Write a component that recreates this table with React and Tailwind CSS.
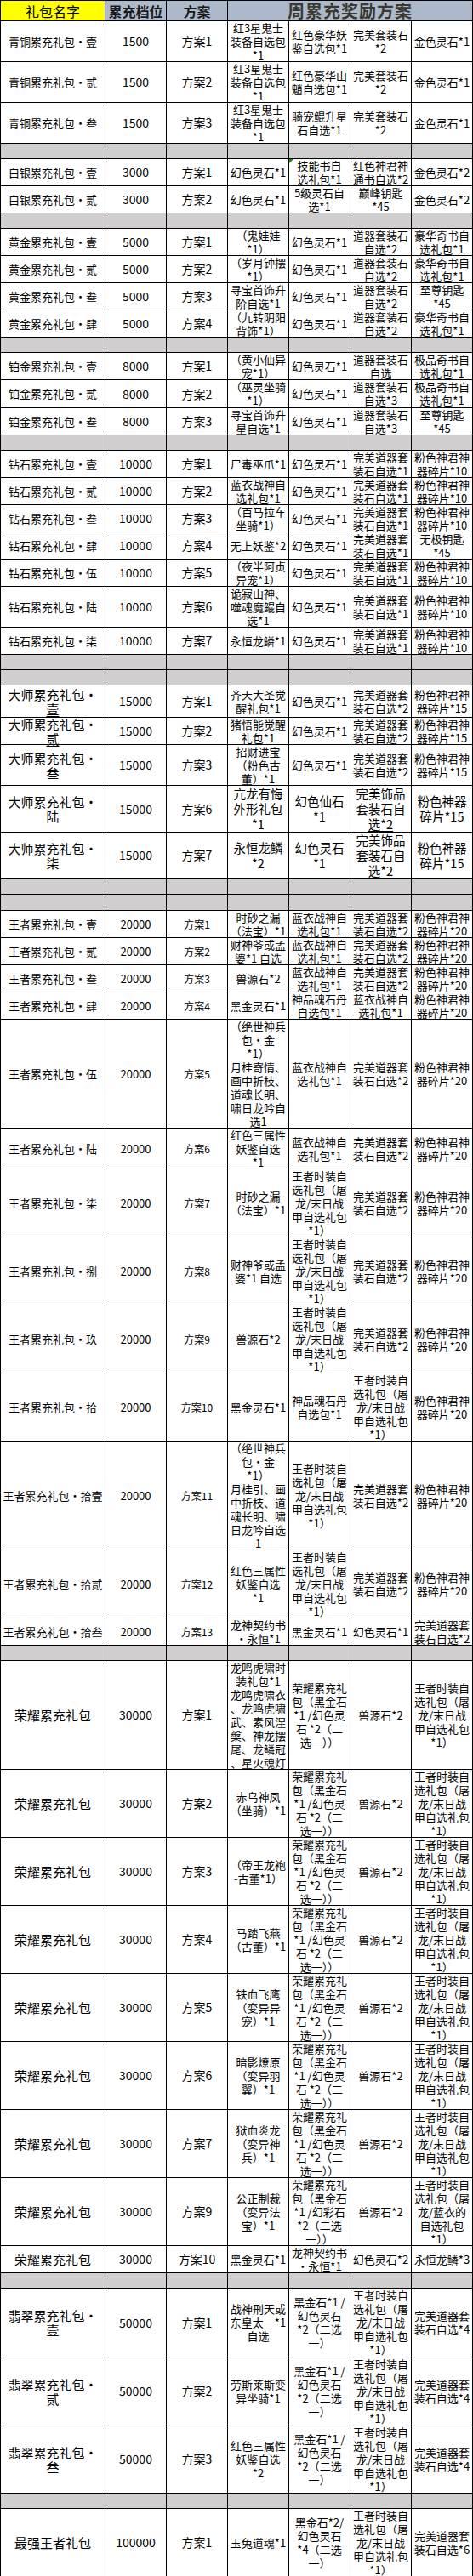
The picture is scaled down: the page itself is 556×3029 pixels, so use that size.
import React from 'react';

// repeated reward cells
const HS = ['幻色灵石*1'];
const SY = ['兽源石*2'];
const RED3 = ['红3星鬼士', '装备自选包', '*1'];
const TZ2 = ['完美套装石', '*2'];
const DQ2 = ['道器套装石', '_自选*2'];
const HH = ['豪华奇书自', '_选礼包*1'];
const JPQ = ['极品奇书自', '_选礼包*1'];
const WM1 = ['完美道器套', '_装石自选*1'];
const FS10 = ['粉色神君神', '器碎片*10'];
const WM2 = ['完美道器套', '装石自选*2'];
const WM2U = ['完美道器套', '_装石自选*2'];
const FS15 = ['粉色神君神', '器碎片*15'];
const FS20 = ['粉色神君神', '器碎片*20'];
const LY = ['蓝衣战神自', '_选礼包*1'];
const JP = ['王者时装自', '选礼包（屠', '龙/末日战', '甲自选礼包', '*1）'];
const RY = ['荣耀累充礼', '包（黑金石', '*1 /幻色灵', '石 *2（二', '选一））'];
const RYU = ['荣耀累充礼', '包（黑金石', '*1 /幻色灵', '石 *2（二', '_选一））'];
const HJ = ['黑金石*1 /', '幻色灵石', '*2（二选', '一）'];
const WM4 = ['完美道器套', '装石自选*4'];

const rows = [
  { h: 'h-[48px]', t: 'n', name: ['青铜累充礼包・壹'], amt: '1500', plan: '方案1', c: [RED3, ['红色豪华妖', '鉴自选包*1'], TZ2, ['金色灵石*1']] },
  { h: 'h-[48px]', t: 'n', name: ['青铜累充礼包・贰'], amt: '1500', plan: '方案2', c: [RED3, ['红色豪华山', '魈自选包*1'], TZ2, ['金色灵石*1']] },
  { h: 'h-[48px]', t: 'n', name: ['青铜累充礼包・叁'], amt: '1500', plan: '方案3', c: [RED3, ['骑宠鲲升星', '石自选*1'], TZ2, ['金色灵石*1']] },
  { gap: 'h-[18px]' },
  { h: 'h-[32px]', t: 'n', tri: true, name: ['白银累充礼包・壹'], amt: '3000', plan: '方案1', c: [HS, ['技能书自', '选礼包*1'], ['红色神君神', '_通书自选*2'], ['金色灵石*2']] },
  { h: 'h-[32px]', t: 'n', name: ['白银累充礼包・贰'], amt: '3000', plan: '方案2', c: [HS, ['5级灵石自', '选*1'], ['巅峰钥匙', '*45'], ['金色灵石*2']] },
  { gap: 'h-[18px]' },
  { h: 'h-[32px]', t: 'n', name: ['黄金累充礼包・壹'], amt: '5000', plan: '方案1', c: [['（鬼娃娃', '_*1）'], HS, DQ2, HH] },
  { h: 'h-[32px]', t: 'n', name: ['黄金累充礼包・贰'], amt: '5000', plan: '方案2', c: [['（岁月钟摆', '_*1）'], HS, DQ2, HH] },
  { h: 'h-[32px]', t: 'n', name: ['黄金累充礼包・叁'], amt: '5000', plan: '方案3', c: [['寻宝首饰升', '_阶自选*1'], HS, DQ2, ['至尊钥匙', '*45']] },
  { h: 'h-[32px]', t: 'n', name: ['黄金累充礼包・肆'], amt: '5000', plan: '方案4', c: [['（九转阴阳', '_背饰*1）'], HS, DQ2, HH] },
  { gap: 'h-[18px]' },
  { h: 'h-[32px]', t: 'n', name: ['铂金累充礼包・壹'], amt: '8000', plan: '方案1', c: [['（黄小仙异', '_宠*1）'], HS, ['道器套装石', '_自选'], JPQ] },
  { h: 'h-[33px]', t: 'n', name: ['铂金累充礼包・贰'], amt: '8000', plan: '方案2', c: [['（巫灵坐骑', '*1）'], HS, ['道器套装石', '_自选*3'], JPQ] },
  { h: 'h-[32px]', t: 'n', name: ['铂金累充礼包・叁'], amt: '8000', plan: '方案3', c: [['寻宝首饰升', '_星自选*1'], HS, ['道器套装石', '_自选*3'], ['至尊钥匙', '*45']] },
  { gap: 'h-[18px]' },
  { h: 'h-[32px]', t: 'n', name: ['钻石累充礼包・壹'], amt: '10000', plan: '方案1', c: [['尸毒巫爪*1'], HS, WM1, FS10] },
  { h: 'h-[32px]', t: 'n', name: ['钻石累充礼包・贰'], amt: '10000', plan: '方案2', c: [['蓝衣战神自', '_选礼包*1'], HS, WM1, FS10] },
  { h: 'h-[32px]', t: 'n', name: ['钻石累充礼包・叁'], amt: '10000', plan: '方案3', c: [['（百马拉车', '_坐骑*1）'], HS, WM1, FS10] },
  { h: 'h-[32px]', t: 'n', name: ['钻石累充礼包・肆'], amt: '10000', plan: '方案4', c: [['无上妖鉴*2'], HS, WM1, ['无极钥匙', '*45']] },
  { h: 'h-[32px]', t: 'n', name: ['钻石累充礼包・伍'], amt: '10000', plan: '方案5', c: [['（夜半阿贞', '_异宠*1）'], HS, WM1, FS10] },
  { h: 'h-[48px]', t: 'n', name: ['钻石累充礼包・陆'], amt: '10000', plan: '方案6', c: [['诡寂山神、', '噬魂魔鲲自', '_选*1'], HS, ['完美道器套', '装石自选*1'], FS10] },
  { h: 'h-[32px]', t: 'n', name: ['钻石累充礼包・柒'], amt: '10000', plan: '方案7', c: [['永恒龙鳞*1'], HS, WM1, FS10] },
  { gap: 'h-[18px]' },
  { gap: 'h-[18px]' },
  { h: 'h-[38px]', t: 'b', name: ['大师累充礼包・', '_壹'], amt: '15000', plan: '方案1', c: [['齐天大圣觉', '醒礼包*1'], HS, WM2, FS15] },
  { h: 'h-[32px]', t: 'b', name: ['大师累充礼包・', '_贰'], amt: '15000', plan: '方案2', c: [['猪悟能觉醒', '礼包*1'], HS, WM2, FS15] },
  { h: 'h-[48px]', t: 'b', name: ['大师累充礼包・', '叁'], amt: '15000', plan: '方案3', c: [['招财进宝', '（粉色古', '_董）*1'], HS, WM2, FS15] },
  { h: 'h-[55px]', t: 'b', big: true, name: ['大师累充礼包・', '陆'], amt: '15000', plan: '方案6', c: [['亢龙有悔', '外形礼包', '*1'], ['幻色仙石', '*1'], ['完美饰品', '套装石自', '_选*2'], ['粉色神器', '碎片*15']] },
  { h: 'h-[54px]', t: 'b', big: true, name: ['大师累充礼包・', '柒'], amt: '15000', plan: '方案7', c: [['永恒龙鳞', '*2'], ['幻色灵石', '*1'], ['完美饰品', '套装石自', '_选*2'], ['粉色神器', '碎片*15']] },
  { gap: 'h-[19px]' },
  { gap: 'h-[19px]' },
  { h: 'h-[32px]', t: 'w', name: ['王者累充礼包・壹'], amt: '20000', plan: '方案1', c: [['时砂之漏', '（法宝）*1'], LY, WM2U, FS20] },
  { h: 'h-[32px]', t: 'w', name: ['王者累充礼包・贰'], amt: '20000', plan: '方案2', c: [['财神爷或孟', '_婆*1 自选'], LY, WM2U, FS20] },
  { h: 'h-[32px]', t: 'w', name: ['王者累充礼包・叁'], amt: '20000', plan: '方案3', c: [SY, LY, WM2U, FS20] },
  { h: 'h-[32px]', t: 'w', name: ['王者累充礼包・肆'], amt: '20000', plan: '方案4', c: [['黑金灵石*1'], ['神品魂石丹', '_自选包*1'], LY, FS20] },
  { h: 'h-[128px]', t: 'w', name: ['王者累充礼包・伍'], amt: '20000', plan: '方案5', c: [['（绝世神兵', '包・金', '*1）', '月桂寄情、', '画中折枝、', '道魂长明、', '啸日龙吟自', '_选1'], ['蓝衣战神自', '选礼包*1'], WM2, FS20] },
  { h: 'h-[48px]', t: 'w', name: ['王者累充礼包・陆'], amt: '20000', plan: '方案6', c: [['红色三属性', '妖鉴自选', '*1'], ['蓝衣战神自', '选礼包*1'], WM2, FS20] },
  { h: 'h-[80px]', t: 'w', name: ['王者累充礼包・柒'], amt: '20000', plan: '方案7', c: [['时砂之漏', '（法宝）*1'], JP, WM2, FS20] },
  { h: 'h-[80px]', t: 'w', name: ['王者累充礼包・捌'], amt: '20000', plan: '方案8', c: [['财神爷或孟', '婆*1 自选'], JP, WM2, FS20] },
  { h: 'h-[80px]', t: 'w', name: ['王者累充礼包・玖'], amt: '20000', plan: '方案9', c: [SY, JP, WM2, FS20] },
  { h: 'h-[80px]', t: 'w', name: ['王者累充礼包・拾'], amt: '20000', plan: '方案10', c: [['黑金灵石*1'], ['神品魂石丹', '自选包*1'], JP, FS20] },
  { h: 'h-[128px]', t: 'w', name: ['王者累充礼包・拾壹'], amt: '20000', plan: '方案11', c: [['（绝世神兵', '包・金', '*1）', '月桂引、画', '中折枝、道', '魂长明、啸', '日龙吟自选', '1'], JP, WM2, FS20] },
  { h: 'h-[80px]', t: 'w', name: ['王者累充礼包・拾贰'], amt: '20000', plan: '方案12', c: [['红色三属性', '妖鉴自选', '*1'], JP, WM2, FS20] },
  { h: 'h-[32px]', t: 'w', name: ['王者累充礼包・拾叁'], amt: '20000', plan: '方案13', c: [['龙神契约书', '_・永恒*1'], ['黑金灵石*1'], HS, WM2U] },
  { gap: 'h-[18px]' },
  { h: 'h-[128px]', t: 'b', name: ['荣耀累充礼包'], amt: '30000', plan: '方案1', c: [['龙鸣虎啸时', '装礼包*1', '龙鸣虎啸衣', '、龙鸣虎啸', '武、素风涅', '槃、神龙摆', '尾、龙鳞冠', '_、星火魂灯'], RY, SY, JP] },
  { h: 'h-[80px]', t: 'b', name: ['荣耀累充礼包'], amt: '30000', plan: '方案2', c: [['赤乌神凤', '（坐骑）*1'], RYU, SY, JP] },
  { h: 'h-[80px]', t: 'b', name: ['荣耀累充礼包'], amt: '30000', plan: '方案3', c: [['（帝王龙袍', '-古董*1）'], RYU, SY, JP] },
  { h: 'h-[80px]', t: 'b', name: ['荣耀累充礼包'], amt: '30000', plan: '方案4', c: [['马踏飞燕', '（古董）*1'], RYU, SY, JP] },
  { h: 'h-[80px]', t: 'b', name: ['荣耀累充礼包'], amt: '30000', plan: '方案5', c: [['铁血飞鹰', '（变异异', '宠）*1'], RYU, SY, JP] },
  { h: 'h-[80px]', t: 'b', name: ['荣耀累充礼包'], amt: '30000', plan: '方案6', c: [['暗影燎原', '（变异羽', '翼）*1'], RYU, SY, JP] },
  { h: 'h-[80px]', t: 'b', name: ['荣耀累充礼包'], amt: '30000', plan: '方案7', c: [['狱血炎龙', '（变异神', '兵）*1'], RYU, SY, JP] },
  { h: 'h-[80px]', t: 'b', name: ['荣耀累充礼包'], amt: '30000', plan: '方案9', c: [['公正制裁', '（变异法', '宝）*1'], ['荣耀累充礼', '包（黑金石', '*1 /幻彩石', '*2（二选', '一））'], SY, ['王者时装自', '选礼包（屠', '龙/蓝衣的', '自选礼包', '*1）']] },
  { h: 'h-[32px]', t: 'b', name: ['荣耀累充礼包'], amt: '30000', plan: '方案10', c: [['黑金灵石*1'], ['龙神契约书', '_・永恒*1'], ['幻色灵石*2'], ['永恒龙鳞*3']] },
  { gap: 'h-[18px]' },
  { h: 'h-[81px]', t: 'b', name: ['翡翠累充礼包・', '壹'], amt: '50000', plan: '方案1', c: [['战神刑天或', '东皇太一*1', '自选'], HJ, JP, WM4] },
  { h: 'h-[80px]', t: 'b', name: ['翡翠累充礼包・', '贰'], amt: '50000', plan: '方案2', c: [['劳斯莱斯变', '异坐骑*1'], HJ, JP, WM4] },
  { h: 'h-[80px]', t: 'b', name: ['翡翠累充礼包・', '叁'], amt: '50000', plan: '方案3', c: [['红色三属性', '妖鉴自选', '*2'], HJ, JP, WM4] },
  { gap: 'h-[18px]' },
  { h: 'h-[80px]', t: 'b', name: ['最强王者礼包'], amt: '100000', plan: '方案1', c: [['玉兔道魂*1'], ['黑金石*2/', '幻色灵石', '*4（二选', '一）'], JP, ['完美道器套', '装石自选*6']] },
];

const sizes = {
  n: { name: 'text-[13px] leading-[16px]', amt: 'text-[14px]', plan: 'text-[14px]' },
  w: { name: 'text-[13px] leading-[16px]', amt: 'text-[13px]', plan: 'text-[12px]' },
  b: { name: 'text-[15px] leading-[17px]', amt: 'text-[14px]', plan: 'text-[14px]' },
};

function Cell({ lines, h, cls = '', tri }) {
  return (
    <div className={`relative ${h} ${cls} flex flex-col items-center justify-center text-center border-r border-b border-black`}>
      {tri && <span className="absolute left-0 top-0 w-0 h-0 border-t-[5px] border-r-[5px] border-t-[#1e8a1e] border-r-transparent" />}
      {lines.map((t, i) => {
        const u = t.startsWith('_');
        return (
          <div key={i} className={u ? 'whitespace-nowrap underline decoration-1 underline-offset-2' : 'whitespace-nowrap'}>
            {u ? t.slice(1) : t}
          </div>
        );
      })}
    </div>
  );
}

export default function App() {
  return (
    <div className="w-[556px] bg-white text-black font-['Noto_Sans_CJK_SC',sans-serif]">
      <div className="grid grid-cols-[123px_72px_72px_72px_72px_72px_72px] border-l border-t border-black">
        <div className="h-[24px] bg-[#ffff00] border-r border-b border-black flex items-center justify-center text-[16px] leading-none">礼包名字</div>
        <div className="h-[24px] bg-[#acb9ca] border-r border-b border-black flex items-center justify-center text-[16px] font-bold leading-none text-[#1a1a1a]">累充档位</div>
        <div className="h-[24px] bg-[#acb9ca] border-r border-b border-black flex items-center justify-center text-[16px] font-bold leading-none text-[#1a1a1a]">方案</div>
        <div className="col-span-4 h-[24px] bg-[#acb9ca] border-r border-b border-black flex items-center justify-center text-[20px] font-bold leading-none tracking-[1px] text-[#3a3a30]">周累充奖励方案</div>

        {rows.map((r, i) => {
          if (r.gap) {
            return (
              <React.Fragment key={i}>
                {[0, 1, 2, 3, 4, 5, 6].map((k) => (
                  <div key={k} className={`${r.gap} bg-[#d0cece] border-r border-b border-black`} />
                ))}
              </React.Fragment>
            );
          }
          const s = sizes[r.t];
          const rc = r.big ? 'text-[14.5px] leading-[18px]' : 'text-[13px] leading-[16px]';
          return (
            <React.Fragment key={i}>
              <Cell lines={r.name} h={r.h} cls={s.name} />
              <Cell lines={[r.amt]} h={r.h} cls={s.amt} />
              <Cell lines={[r.plan]} h={r.h} cls={s.plan} />
              {r.c.map((lines, k) => (
                <Cell key={k} lines={lines} h={r.h} cls={rc} tri={r.tri && k === 1} />
              ))}
            </React.Fragment>
          );
        })}
      </div>
    </div>
  );
}
